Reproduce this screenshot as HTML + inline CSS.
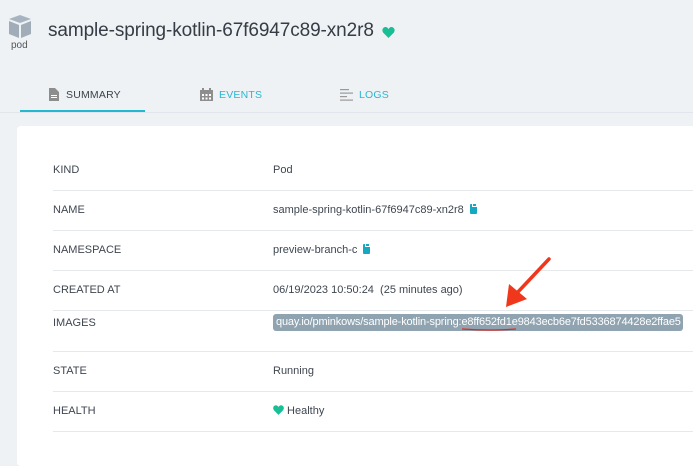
<!DOCTYPE html>
<html><head><style>
body{margin:0;width:693px;height:441px;overflow:hidden;background:#eef2f5;font-family:"Liberation Sans",sans-serif;position:relative}
.abs{position:absolute}
.card{position:absolute;left:17px;top:126px;width:700px;height:340px;background:#fff;border-radius:4px}
.row{position:absolute;left:53px;width:660px;height:40px;border-bottom:1px solid #e6e9ec;font-size:11px;color:#3f4650}
.row .l{position:absolute;left:0;top:0;line-height:40px}
.row .v{position:absolute;left:220px;top:0;line-height:40px;white-space:nowrap}
.clip{display:inline-block;width:7px;height:10px;background:#16a7c2;border-radius:1px;margin-left:6px;vertical-align:-1px;position:relative}
.clip:after{content:"";position:absolute;left:2px;top:-1px;width:3px;height:2px;background:#16a7c2;border:0.5px solid #fff}
.tab{position:absolute;top:89px;font-size:10.5px;letter-spacing:0.2px}
</style></head><body>
<svg class="abs" style="left:7px;top:14px" width="26" height="25" viewBox="0 0 26 25">
<polygon points="13,1 24,5 13,9 2,5" fill="#a7b4bf"/>
<polygon points="2,7 12,11 12,24 2,20" fill="#a0adb9"/>
<polygon points="14,11 24,7 24,20 14,24" fill="#a0adb9"/>
</svg>
<div class="abs" style="left:11px;top:40px;font-size:10px;color:#555">pod</div>
<div class="abs" style="left:48px;top:20px;font-size:19px;color:#363c45;letter-spacing:-0.1px">sample-spring-kotlin-67f6947c89-xn2r8</div>
<svg class="abs" style="left:382px;top:27px" width="13" height="11" viewBox="0 0 24 21"><path d="M12 21L2 11C-1 7 0 1 6 0c3 0 5 2 6 4 1-2 3-4 6-4 6 1 7 7 4 11z" fill="#18be94"/></svg>
<svg class="abs" style="left:49px;top:88px" width="10" height="13" viewBox="0 0 10 13"><path d="M0 0h6l4 4v9H0z" fill="#8d8d8d"/><rect x="2" y="7" width="6" height="1" fill="#fff"/><rect x="2" y="9" width="6" height="1" fill="#fff"/></svg>
<div class="tab" style="left:66px;color:#3c434b">SUMMARY</div>
<div class="abs" style="left:20px;top:110px;width:125px;height:2px;background:#22b8cf"></div>
<div class="abs" style="left:0;top:112px;width:693px;height:1px;background:#e2e6ea"></div>
<svg class="abs" style="left:200px;top:88px" width="13" height="13" viewBox="0 0 13 13"><rect x="0" y="2" width="13" height="11" fill="#8e8e8e"/><rect x="2" y="0" width="2" height="3" fill="#8e8e8e"/><rect x="9" y="0" width="2" height="3" fill="#8e8e8e"/><g fill="#fff"><rect x="2" y="6" width="2" height="2"/><rect x="5.5" y="6" width="2" height="2"/><rect x="9" y="6" width="2" height="2"/><rect x="2" y="9.5" width="2" height="2"/><rect x="5.5" y="9.5" width="2" height="2"/><rect x="9" y="9.5" width="2" height="2"/></g></svg>
<div class="tab" style="left:219px;color:#2bb6d3">EVENTS</div>
<svg class="abs" style="left:340px;top:89px" width="13" height="12" viewBox="0 0 13 12" fill="#999"><rect y="0" width="9" height="1.2"/><rect y="3.5" width="13" height="1.2"/><rect y="7" width="7" height="1.2"/><rect y="10.5" width="13" height="1.2"/></svg>
<div class="tab" style="left:359px;color:#2bb6d3">LOGS</div>
<div class="card"></div>
<div class="row" style="top:150px"><span class="l">KIND</span><span class="v">Pod</span></div>
<div class="row" style="top:190px"><span class="l">NAME</span><span class="v">sample-spring-kotlin-67f6947c89-xn2r8<span class="clip"></span></span></div>
<div class="row" style="top:230px"><span class="l">NAMESPACE</span><span class="v">preview-branch-c<span class="clip"></span></span></div>
<div class="row" style="top:270px"><span class="l">CREATED AT</span><span class="v">06/19/2023 10:50:24 &nbsp;(25 minutes ago)</span></div>
<div class="row" style="top:310px;height:41px"><span class="l" style="line-height:26px">IMAGES</span><span class="v" style="top:4px;line-height:17px;background:#8fa3b0;color:#fff;border-radius:3px;padding:0 3px;left:220px;width:404px;letter-spacing:-0.15px">quay.io/pminkows/sample-kotlin-spring:e8ff652fd1e9843ecb6e7fd5336874428e2ffae5</span></div>
<div class="row" style="top:351px"><span class="l">STATE</span><span class="v">Running</span></div>
<div class="row" style="top:391px"><span class="l">HEALTH</span><span class="v"><svg width="11" height="10" viewBox="0 0 24 21" style="vertical-align:-1px"><path d="M12 21L2 11C-1 7 0 1 6 0c3 0 5 2 6 4 1-2 3-4 6-4 6 1 7 7 4 11z" fill="#18be94"/></svg> Healthy</span></div>
<svg class="abs" style="left:0;top:0" width="693" height="441">
<line x1="549" y1="259" x2="517" y2="293" stroke="#f0371c" stroke-width="3.5" stroke-linecap="round"/>
<polygon points="506,307 509,284 527,299" fill="#f0371c"/>
<path d="M462 329 Q490 331 516 329" stroke="#e8261a" stroke-width="1.3" fill="none"/>
</svg>
</body></html>
